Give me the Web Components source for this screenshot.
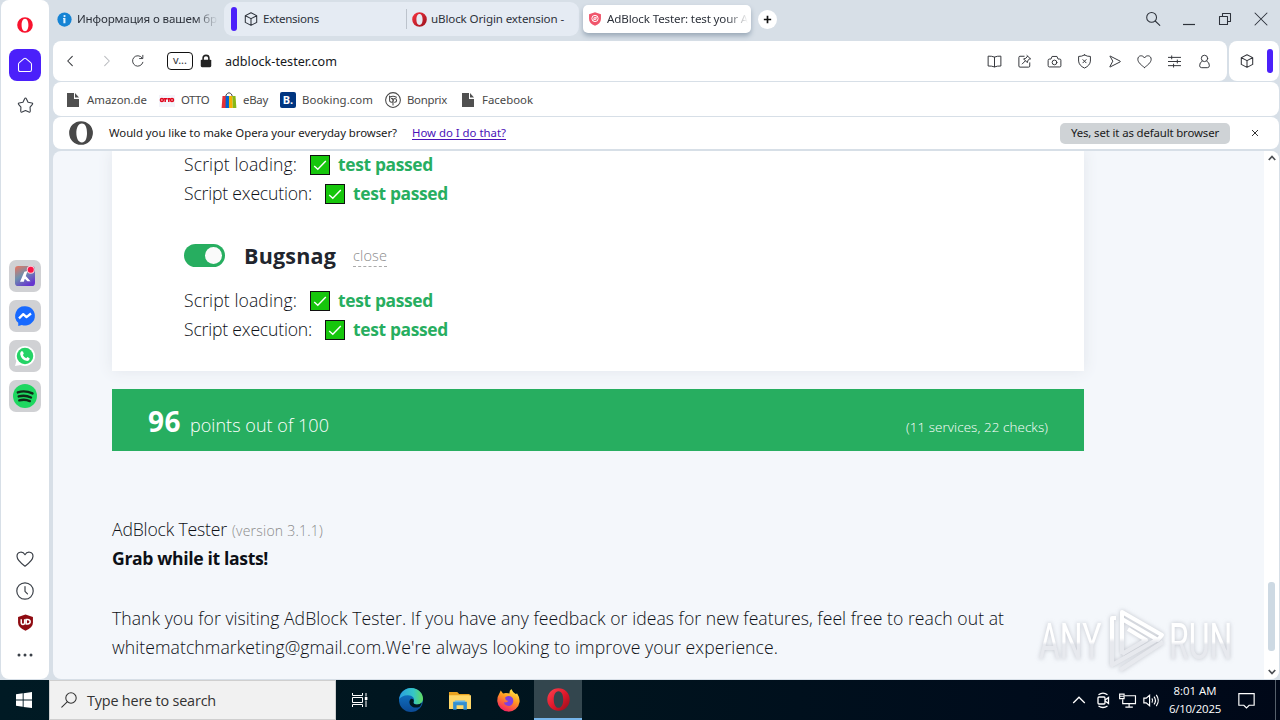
<!DOCTYPE html>
<html lang="en">
<head>
<meta charset="utf-8">
<title>AdBlock Tester</title>
<style>
html,body{margin:0;height:100%}
body{width:1280px;height:720px;overflow:hidden;background:#d7dfe7;font-family:"Noto Sans","Open Sans",sans-serif}
</style>
</head>
<body>
<desktop-screen></desktop-screen>
<script>
const define=(name,css,html,setup)=>customElements.define(name,class extends HTMLElement{
  connectedCallback(){
    if(this.shadowRoot)return;
    const root=this.attachShadow({mode:'open'});
    root.innerHTML='<style>*{box-sizing:border-box}'+css+'</style>'+html;
    if(setup)setup(this,root);
  }
});

/* Text that spreads its letters to fill the width given in "w". */
define('fit-text',`:host{display:block;flex:none;white-space:nowrap}span{display:inline-block;text-decoration:inherit}`,`<span><slot></slot></span>`,(el,root)=>{
  const w=+el.getAttribute('w'),s=root.querySelector('span');
  el.style.width=w+'px';
  const n=el.textContent.length;
  s.style.letterSpacing=((w-s.getBoundingClientRect().width)/n).toFixed(4)+'px';
});

const L='fill="none" stroke="currentColor" stroke-width="1.05" stroke-linecap="round" stroke-linejoin="round"';
const cube=`<path ${L} d="M8 1.8 13.7 4.6V11.4L8 14.4 2.3 11.4V4.6ZM2.5 4.8 8 7.6 13.5 4.8M8 7.6V14.2"/>`;
const heart=`<path ${L} d="M8 14.4C5 12.2 .9 9.2 .9 5.6 .9 1.4 6 .6 8 4.2 10 .6 15.1 1.4 15.1 5.6 15.1 9.2 11 12.2 8 14.4Z"/>`;
const ring=(a)=>`<path fill="${a}" fill-rule="evenodd" d="M8 .2A7.8 7.8 0 1 1 8 15.8 7.8 7.8 0 1 1 8 .2ZM8 2.2C5.7 2.2 4.7 5 4.7 8S5.7 13.8 8 13.8 11.3 11 11.3 8 10.3 2.2 8 2.2Z"/>`;
const file=`<path fill="#505050" d="M2 1H9V7H14V15H2Z"/><path fill="#505050" d="M10 1 14 5.6H10Z"/>`;
const icons={
  operaSide:`<path fill="#f8132e" fill-rule="evenodd" d="M8 .2A7.8 7.8 0 1 1 8 15.8 7.8 7.8 0 1 1 8 .2ZM8 1.8C5.6 1.8 4.6 5 4.6 8S5.6 14.2 8 14.2 11.4 11 11.4 8 10.4 1.8 8 1.8Z"/>`,
  operaTab:`<defs><linearGradient id="g" x2="1" y2="1"><stop stop-color="#fa3340"/><stop offset="1" stop-color="#99121d"/></linearGradient></defs>`+ring('url(#g)'),
  operaGrey:`<path fill="#484848" fill-rule="evenodd" d="M8 .1A7.9 7.9 0 1 1 8 15.9 7.9 7.9 0 1 1 8 .1ZM8.6 1.7C6 1.7 4.9 5 4.9 8S6 14.3 8.6 14.3 12 11 12 8 11.2 1.7 8.6 1.7Z"/><path fill="#484848" d="M9.6 1.2Q13.2 2.8 13.2 8T9.6 14.8Q15.6 13.6 15.6 8T9.6 1.2Z"/>`,
  home:`<path ${L} d="M1.5 7.2Q1.5 6.2 2.3 5.6L7 1.6Q8 .9 9 1.6L13.7 5.6Q14.5 6.2 14.5 7.2V12.8Q14.5 14.5 12.8 14.5H3.2Q1.5 14.5 1.5 12.8Z"/>`,
  star:`<path ${L} d="M8 1 Q8.5 1 8.9 1.8L10.4 4.9 14 5.6Q15.2 6 14.5 6.9L12.3 9.6 12.5 13.2Q12.4 14.6 11.2 14.2L8 12.8 4.8 14.2Q3.6 14.6 3.5 13.2L3.7 9.6 1.5 6.9Q.8 6 2 5.6L5.6 4.9 7.1 1.8Q7.5 1 8 1Z"/>`,
  heart,cube,file,
  clock:`<circle cx="8" cy="8" r="7.3" ${L}/><path ${L} d="M8 4V8.3L10.2 10.6"/>`,
  ublock:`<path fill="#8f0c12" d="M8 .5 15 2.8V8Q15 13 8 15.7 1 13 1 8V2.8Z"/><path fill="none" stroke="#fff" stroke-width="1.4" d="M4 5V8Q4 9.8 5.6 9.8T7.2 8V5M8.7 5.2V9.5H10Q12.4 9.2 12.4 7.3T10 5.2Z"/>`,
  dots:`<circle cx="2" cy="8" r="1.5" fill="currentColor"/><circle cx="8" cy="8" r="1.5" fill="currentColor"/><circle cx="14" cy="8" r="1.5" fill="currentColor"/>`,
  info:`<circle cx="8" cy="8" r="7.6" fill="#1583d4"/><circle cx="8" cy="4.3" r="1.2" fill="#dff1ff"/><path fill="#dff1ff" d="M6.4 6.4H9V12H6.8V7.4H6.4Z"/>`,
  shieldRed:`<path fill="#f0566c" d="M8 .2 14.8 2.5V8Q14.8 13 8 15.8 1.2 13 1.2 8V2.5Z"/><circle cx="8" cy="7.4" r="3.6" fill="none" stroke="#fff" stroke-width="1.1"/><circle cx="8" cy="7.4" r="1.4" fill="none" stroke="#fff" stroke-width=".9"/><path stroke="#fff" d="M5.5 10 10.6 4.9"/>`,
  plus:`<path stroke="#111" stroke-width="3" d="M8 1.5V14.5M1.5 8H14.5"/>`,
  search:`<circle cx="6.6" cy="6.4" r="4.9" ${L}/><path ${L} d="M10.2 10 14.8 14.4"/>`,
  min:`<path stroke="currentColor" stroke-width="1.2" d="M2 13.5H14"/>`,
  restore:`<path ${L} d="M2.5 5.5H10.5V13.5H2.5ZM5.5 5.5V2.5H13.5V10.5H10.5"/>`,
  close:`<path ${L} d="M2 2 14 14M14 2 2 14"/>`,
  closeSmall:`<path fill="none" stroke="#333" stroke-width="2" d="M2 2 14 14M14 2 2 14"/>`,
  back:`<path ${L} d="M10.3 3.4 5.7 8 10.3 12.6"/>`,
  fwd:`<path ${L} d="M5.7 3.4 10.3 8 5.7 12.6"/>`,
  reload:`<path ${L} d="M13.6 9.5A6 6 0 1 1 12.6 4.3M13.5 1.5V5.2H9.8"/>`,
  lock:`<path fill="#222" d="M3 6.5H13Q14 6.5 14 7.5V13.5Q14 15 12.5 15H3.5Q2 15 2 13.5V7.5Q2 6.5 3 6.5Z"/><path fill="none" stroke="#222" stroke-width="1.8" d="M4.7 7V4.6Q4.7 1.6 8 1.6T11.3 4.6V7"/>`,
  book:`<path ${L} d="M8 3.3Q5 2 1.2 2.3V12.8Q5 12.6 8 13.8 11 12.6 14.8 12.8V2.3Q11 2 8 3.3V13.6"/>`,
  edit:`<path ${L} d="M7.6 2.4H3.2Q2 2.4 2 3.6V12.8Q2 14 3.2 14H12.4Q13.6 14 13.6 12.8V9.4M10.6 1.6 14.6 5.4M11.2 2.4 9.4 4.6 7 5.2 11 9.2 11.6 6.8 13.8 5M8.8 7.4 5.6 10.6"/>`,
  camera:`<path ${L} d="M1.2 6.6Q1.2 5.4 2.4 5.4H4.2L5.4 2.6H10.6L11.8 5.4H13.6Q14.8 5.4 14.8 6.6V12.6Q14.8 13.8 13.6 13.8H2.4Q1.2 13.8 1.2 12.6Z"/><circle cx="8" cy="9" r="2.5" ${L}/>`,
  shield:`<path ${L} d="M8 1Q11 2.8 14.3 2.6V7.6Q13.8 12.4 8 15 2.2 12.4 1.7 7.6V2.6Q5 2.8 8 1ZM6.3 6 9.7 9.4M9.7 6 6.3 9.4"/>`,
  send:`<path ${L} d="M3.2 2.6Q2.6 2 3.4 2.2L14 7.6Q14.6 8 14 8.4L3.4 13.8Q2.6 14 3.2 13.2L6 8Z"/>`,
  sliders:`<path ${L} d="M1.5 3.6H14.5M1.5 8H14.5M1.5 12.4H14.5M5 2V5.2M11 6.4V9.6M7 10.8V14"/>`,
  person:`<circle cx="8" cy="4.7" r="3.4" ${L}/><path ${L} d="M5.5 7.6Q2.6 9 2.8 12.6 3 14.6 5 14.6H11Q13 14.6 13.2 12.6 13.4 9 10.5 7.6"/>`,
  otto:`<path fill="#f4f4fa" d="M0 3H16V15H0Z"/><g fill="none" stroke="#e0051c" stroke-width="1.5"><circle cx="2.9" cy="8" r="1.5"/><path d="M4.6 6.7H8M6.2 6.7V10M8.3 6.7H11.4M9.8 6.7V10"/><circle cx="13" cy="8" r="1.5"/></g>`,
  ebay:`<path fill="none" stroke="#444" d="M5 5V3Q8-1.5 11 3V5"/><path fill="#e53238" d="M1.5 4H5V16H.6Z"/><path fill="#0064d2" d="M4.7 4H8V16H4.5Z"/><path fill="#f5af02" d="M8 4H11.3L11.8 16H8Z"/><path fill="#86b817" d="M11.3 4H14.5L15.4 16H11.8Z"/>`,
  bonprix:`<circle cx="8" cy="8" r="7.4" ${L}/><path ${L} d="M4.6 4V8.2A1.9 1.9 0 1 0 6.4 6.4Q8 6.6 8 8.4V13M8 8.4Q8 6.4 9.8 6.4A1.9 1.9 0 1 1 9.6 10.2M4.6 5.2Q8 3.4 11.4 5.2"/>`,
  up:`<path fill="none" stroke="currentColor" stroke-width="3.4" d="M1.5 12 8 5 14.5 12"/>`,
  down:`<path fill="none" stroke="currentColor" stroke-width="3.4" d="M1.5 4 8 11 14.5 4"/>`,
  aria:`<defs><linearGradient id="g" x1="0" y1="0" x2=".6" y2="1"><stop stop-color="#ed735c"/><stop offset=".5" stop-color="#6f91ad"/><stop offset="1" stop-color="#6636cf"/></linearGradient></defs><rect width="16" height="16" rx="2.5" fill="url(#g)"/><path fill="#fff" d="M7.5 4.5 10 4 7 12.5H4ZM8.6 8 12.4 12.2H10L7.4 9.8Z"/><circle cx="12.6" cy="3" r="3.2" fill="#ffccd6"/><circle cx="12.6" cy="3" r="2.4" fill="#fa1446"/>`,
  messenger:`<path fill="#1769ff" d="M8 .2A7.7 7.7 0 1 1 5.5 15.1L2.6 16V13.4A7.6 7.6 0 0 1 8 .2Z"/><path fill="none" stroke="#fff" stroke-width="1.8" stroke-linejoin="round" d="M3.2 9.9 6.6 6.5 9.2 8.9 12.8 6"/>`,
  whatsapp:`<path fill="#fff" d="M8 0A8 8 0 1 1 4.4 15.1L0 16 1.1 12A8 8 0 0 1 8 0Z"/><circle cx="8" cy="8" r="6.6" fill="#25d366"/><path fill="#fff" d="M5 4.2 6.4 4.4 7 6.1 6.3 7.2Q7.2 9 9 9.7L9.9 8.8 11.7 9.7Q11.8 11.6 9.8 11.9 5 11.2 4.1 6.3 4.1 5 5 4.2Z"/>`,
  spotify:`<circle cx="8" cy="8" r="8" fill="#1ed760"/><path fill="none" stroke="#102a18" stroke-width="1.6" stroke-linecap="round" d="M3.2 5.6Q8 4 13 6.3M3.8 8.3Q8 7 12 9M4.2 10.9Q8 9.8 11.2 11.4"/>`,
  win:`<path fill="#fff" d="M0 2.3 6.7 1.3V7.6H0ZM7.6 1.2 16 0V7.6H7.6ZM0 8.5H6.7V14.8L0 13.8ZM7.6 8.5H16V16L7.6 14.9Z"/>`,
  winsearch:`<circle cx="10" cy="6" r="5.2" ${L}/><path ${L} d="M6.2 9.8.8 15.2"/>`,
  tasks:`<path fill="none" stroke="#fff" d="M.5 1V3.5H10.5V1M.5 15V12.5H10.5V15M.5 5.5H10.5V10.5H.5ZM14 1V4.5M14 8.5V15"/><path fill="#fff" d="M12.8 5H15.4V8H12.8Z"/>`,
  edge:`<defs><linearGradient id="g" x2="1"><stop stop-color="#2a9fe0"/><stop offset=".6" stop-color="#35c6c6"/><stop offset="1" stop-color="#62db5c"/></linearGradient><linearGradient id="h" y2="1" x2="0"><stop stop-color="#117ccd"/><stop offset="1" stop-color="#0b4a95"/></linearGradient></defs><circle cx="8" cy="8" r="8" fill="url(#h)"/><path fill="url(#g)" d="M.1 7.4C.8 2.8 4.3 0 8 0 13 0 16 3.8 16 7 16 9.7 14 11 12 11 10 11 9.3 10.2 9.8 9.2 10.8 7 9 4.8 6 4.8 3 4.8 1 6 .1 7.4Z"/><path fill="#001820" d="M9.8 9.2Q9.2 10.4 10.8 10.9 13.5 11.4 15.1 9.9 15 11.4 13.6 12.7 9 13.9 7.3 11 6.3 8.7 8 7.2 10.2 7 9.8 9.2Z"/>`,
  folder:`<path fill="#e9a21f" d="M0 1.5H6L7.4 3H15V6H0Z"/><path fill="#ffd768" d="M0 4H16V14.5H0Z"/><path fill="#338fd0" d="M3 9H13V15H10.5V11.7H5.5V15H3Z"/><path fill="#65b7ec" d="M4.2 8H11.8V9.3H4.2Z"/>`,
  firefox:`<defs><linearGradient id="g" x1=".8" y1="0" x2=".3" y2="1"><stop stop-color="#fff04a"/><stop offset=".45" stop-color="#ff9821"/><stop offset="1" stop-color="#f51b65"/></linearGradient></defs><path fill="url(#g)" d="M1.6 3.2 2.6 1 4.2 3.2 6.2 2.8Q8.2 2.8 8.6 3.2 8.6 1 10 0 10.8 2.2 13 3.5L14 3.2Q16 6 15.7 9A7.8 7.8 0 0 1 .2 8.6Q.1 5.3 1.6 3.2Z"/><path fill="#7f3fe0" d="M5.8 5.7Q9 3.8 11 6.5 12.3 10.4 8.6 11.9 5.4 11.8 4.8 9.2 6.7 10 8 8.2 5.3 8 5.8 5.7Z"/>`,
  operaTask:`<defs><linearGradient id="g" x2="1" y2="1"><stop stop-color="#ff4250"/><stop offset=".55" stop-color="#dd1629"/><stop offset="1" stop-color="#8d101c"/></linearGradient></defs>`+ring('url(#g)'),
  chevUp:`<path fill="none" stroke="#fff" stroke-width="1.3" d="M2.2 11 8 5.2 13.8 11"/>`,
  meet:`<g fill="none" stroke="#fff" stroke-width="1.3"><rect x="3" y="5" width="7" height="7" rx="1"/><path d="M10 8 13.5 5.6V11.4L10 9M3.5 2.8Q8-.5 12.5 2.8M3.5 14Q8 17 12.5 14"/></g>`,
  net:`<g fill="none" stroke="#fff" stroke-width="1.1"><path d="M5.5 3.5H15.5V11H3.5V7M9.5 11V14M6 14.2H13M.6 2H4.8V6.3H.6ZM.6 4H4.8"/></g>`,
  sound:`<g fill="none" stroke="#fff" stroke-width="1.1"><path d="M.8 5.8H3L6.2 3V13L3 10.2H.8ZM8.4 6Q9.8 8 8.4 10M10.4 4.3Q13 8 10.4 11.7M12.5 2.7Q16.3 8 12.5 13.3"/></g>`,
  note:`<path fill="none" stroke="#fff" stroke-width="1.1" d="M.8 1.5H15.2V12.5H10.5L8 15 5.5 12.5H.8Z"/>`
};
define('ui-icon',`:host{display:block;flex:none;line-height:0}svg{display:block;width:100%;height:100%;overflow:visible}`,'',(el,root)=>{
  const s=el.getAttribute('s')||16;
  el.style.width=s+'px';el.style.height=(el.getAttribute('h')||s)+'px';
  root.innerHTML+=`<svg viewBox="0 0 16 16" ${el.hasAttribute('h')?'preserveAspectRatio="none"':''}>${icons[el.getAttribute('name')]}</svg>`;
});

define('side-bar',`:host{display:flex;flex-direction:column;align-items:center;width:48px;height:679px;margin-left:1px;background:#fff;border-radius:8px;color:#3b4048;padding-top:17px}
.home{display:grid;place-items:center;width:32px;height:32px;border-radius:8px;background:#4b20fa;color:#fff;margin:16px 0 16px}
.apps{display:grid;gap:8px;margin-top:146px}.apps div{width:32px;height:32px;border-radius:7px;background:#d0d1d4;display:grid;place-items:center}
.low{display:grid;gap:14px;margin-top:138px;justify-items:center}`,
`<ui-icon name="operaSide" s="16"></ui-icon><div class="home"><ui-icon name="home" s="16"></ui-icon></div><ui-icon name="star" s="17"></ui-icon>
<div class="apps"><div><ui-icon name="aria" s="20"></ui-icon></div><div><ui-icon name="messenger" s="20"></ui-icon></div><div><ui-icon name="whatsapp" s="20"></ui-icon></div><div><ui-icon name="spotify" s="24"></ui-icon></div></div>
<div class="low"><ui-icon name="heart" s="18"></ui-icon><ui-icon name="clock" s="18"></ui-icon><ui-icon name="ublock" s="17"></ui-icon><ui-icon name="dots" s="16" style="margin-top:2px"></ui-icon></div>`);

define('tab-strip',`:host{display:flex;height:41px;font-size:11.6px;line-height:18px;color:#2d323b;position:relative}
.t{display:flex;align-items:center;height:38px;overflow:hidden}
.fade{-webkit-mask:linear-gradient(90deg,#000 calc(100% - 22px),transparent);mask:linear-gradient(90deg,#000 calc(100% - 22px),transparent);overflow:hidden}
.t1{width:171px;padding-left:4px}.t1 .fade{width:141px;margin-left:5px}
.grp{display:flex;width:355px;height:34px;margin-top:2px;background:#e5ebf3;border-radius:9px;align-items:center}
.grp i{width:6px;height:24px;border-radius:3px;background:#4b20fa;margin:0 6px 0 7px}
.sep{width:1px;height:20px;background:#bcc3cc;margin:0 5px 0 87px}
.act{width:168px;height:28px;margin:5px 0 0 4px;background:#fff;border-radius:5px;box-shadow:0 3px 5px #9aa9b8;padding-left:5px}
.act .fade{width:141px;margin-left:5px}
.new{width:19px;height:19px;border-radius:50%;background:#fff;display:grid;place-items:center;margin:10px 0 0 7px}
.win{display:flex;gap:20px;margin:11px 11px 0 auto}`,
`<div class="t t1"><ui-icon name="info" s="15"></ui-icon><div class="fade"><fit-text w="140">Информация о вашем бр</fit-text></div></div>
<div class="grp"><i></i><ui-icon name="cube" s="16"></ui-icon><fit-text w="56" style="margin-left:4px">Extensions</fit-text><div class="sep"></div><ui-icon name="operaTab" s="15"></ui-icon><fit-text w="133" style="margin-left:4px">uBlock Origin extension -</fit-text></div>
<div class="t act"><ui-icon name="shieldRed" s="14"></ui-icon><div class="fade"><fit-text w="141">AdBlock Tester: test your A</fit-text></div></div>
<div class="new"><ui-icon name="plus" s="9"></ui-icon></div>
<div class="win"><ui-icon name="search"></ui-icon><ui-icon name="min"></ui-icon><ui-icon name="restore"></ui-icon><ui-icon name="close"></ui-icon></div>`);

define('address-bar',`:host{display:flex;gap:2px;height:40px;color:#33353a}
div{display:flex;align-items:center;background:#fff;border-radius:8px}
.a{width:1174px;padding-left:9px}.b{width:50px;padding-left:10px;gap:12px}.b i{width:6px;height:24px;border-radius:3px;background:#4b20fa}
.v{width:26px;height:18px;border:1px solid #111;border-radius:4px;justify-content:center;font-size:11px;margin:0 6px 0 22px;line-height:14px;padding-bottom:2px}
.r{gap:15px;margin-left:auto;padding-right:15px}`,
`<div class="a"><ui-icon name="back"></ui-icon><ui-icon name="fwd" style="margin-left:21px;color:#b9bbbf"></ui-icon><ui-icon name="reload" s="14" style="margin-left:16px"></ui-icon><div class="v"><fit-text w="14">v...</fit-text></div><ui-icon name="lock" s="14"></ui-icon><fit-text w="112" style="font-size:12.6px;margin-left:12px;color:#16181c">adblock-tester.com</fit-text>
<div class="r">${['book','edit','camera','shield','send','heart','sliders','person'].map(n=>`<ui-icon name="${n}" s="15"></ui-icon>`).join('')}</div></div>
<div class="b"><ui-icon name="cube" s="16"></ui-icon><i></i></div>`);

define('bookmark-bar',`:host{display:flex;align-items:center;width:1226px;height:34px;background:#fff;border-radius:8px;margin-top:1px;padding:2px 0 0 12px;font-size:11.4px;color:#484848;line-height:18px}
.b{width:16px;height:16px;border-radius:2px;background:#003580;color:#fff;font-weight:700;font-size:11px;line-height:15px;text-align:center}`,
`<ui-icon name="file"></ui-icon><fit-text w="60" style="margin-left:6px">Amazon.de</fit-text>
<ui-icon name="otto" style="margin-left:12px"></ui-icon><fit-text w="28" style="margin-left:6px">OTTO</fit-text>
<ui-icon name="ebay" style="margin-left:12px"></ui-icon><fit-text w="25" style="margin-left:6px">eBay</fit-text>
<div class="b" style="margin-left:12px">B.</div><fit-text w="71" style="margin-left:6px">Booking.com</fit-text>
<ui-icon name="bonprix" style="margin-left:12px"></ui-icon><fit-text w="40" style="margin-left:6px">Bonprix</fit-text>
<ui-icon name="file" style="margin-left:13px"></ui-icon><fit-text w="51" style="margin-left:6px">Facebook</fit-text>`);

define('default-banner',`:host{display:flex;align-items:center;width:1226px;height:32px;background:#fff;border-radius:8px;margin-top:1px;padding-left:16px;font-size:11.4px;line-height:18px;color:#1a1a1a}
a{color:#4a12b8;margin-left:15px}a fit-text{text-decoration:underline;text-underline-offset:2px}
button{all:unset;display:flex;justify-content:center;width:170px;height:21px;line-height:20px;border-radius:5px;background:#cfd3d6;margin-left:auto}
`,
`<ui-icon name="operaGrey" s="24"></ui-icon><fit-text w="288" style="margin-left:16px">Would you like to make Opera your everyday browser?</fit-text><a><fit-text w="94">How do I do that?</fit-text></a>
<button><fit-text w="148">Yes, set it as default browser</fit-text></button><ui-icon name="closeSmall" s="8" style="margin:0 20px 0 21px"></ui-icon>`);

define('test-row',`:host{display:flex;align-items:center;height:29px;font:300 17.6px/29px "Open Sans","Noto Sans",sans-serif;color:#0d1016}
i{width:20px;height:20px;background:#16c60c;border:1.5px solid #101010;margin:0 8px 0 13px;display:grid;place-items:center}
b{font:700 17.4px/29px "Open Sans","Noto Sans",sans-serif;color:#27ae60}svg{width:14px;height:14px}`,
`<slot></slot><i><svg viewBox="0 0 14 14"><path d="M1.2 8 4.8 11.3 12.8 3" fill="none" stroke="#fff" stroke-width="1.4"/></svg></i><b><fit-text w="95">test passed</fit-text></b>`);

define('service-head',`:host{display:flex;align-items:center;height:34px;font-family:"Open Sans","Noto Sans",sans-serif}
.sw{width:41px;height:23px;border-radius:12px;background:#27ae60;padding:3px 3px 0 21px;margin-right:19px}.sw i{display:block;width:17px;height:17px;border-radius:50%;background:#fafafa}
b{font-size:21.5px;line-height:30px;color:#21252d;padding-top:1px}
.c{font-weight:300;font-size:14.5px;line-height:20px;color:#8a8a8a;margin-left:17px;border-bottom:1px dashed #aaa;height:21px;margin-top:3px}`,
`<div class="sw"><i></i></div><b><fit-text w="92">Bugsnag</fit-text></b><div class="c"><fit-text w="34">close</fit-text></div>`);

define('page-view',`:host{display:flex;width:1226px;height:528px;margin-top:2px;background:#f4f7fb;border-radius:8px;overflow:hidden;font-family:"Open Sans","Noto Sans",sans-serif;color:#0d1016}
main{display:flex;flex-direction:column;width:1211px;padding-left:59px}
.card{display:flex;flex-direction:column;flex:none;width:972px;height:220px;background:#fff;box-shadow:0 0 14px #e2e6ec;padding-left:72px}
.card>*{flex:none}
.up{margin-top:-1px}
.score{flex:none;width:972px;height:62px;background:#27ae60;margin-top:18px;color:#fff;display:flex;align-items:baseline;padding:13px 36px 0}
.foot{flex:none;padding-top:64px;font-weight:300;font-size:17.6px;line-height:29px}
.l{display:flex;align-items:baseline}
.sb{width:15px;background:#fff;display:flex;flex-direction:column;align-items:center;color:#4d5055;padding:3px 0 3px}
.sb i{width:7px;height:69px;border-radius:3px;background:#cdd9e3;margin-top:420px;margin-bottom:auto}`,
`<main><div class="card"><test-row class="up"></test-row><test-row></test-row>
<service-head style="margin:30px 0 14px"></service-head>
<test-row></test-row><test-row></test-row></div>
<div class="score"><fit-text w="33" style="font-size:28px;font-weight:700">96</fit-text><fit-text w="139" style="font-size:18px;font-weight:300;margin-left:9px">points out of 100</fit-text><fit-text w="142" style="font-size:13.4px;font-weight:300;margin-left:auto">(11 services, 22 checks)</fit-text></div>
<div class="foot"><div class="l"><fit-text w="115">AdBlock Tester</fit-text><fit-text w="91" style="font-size:14px;color:#8a8a8a;margin-left:5px">(version 3.1.1)</fit-text></div>
<fit-text w="156" style="font-weight:700;margin-top:-1px">Grab while it lasts!</fit-text>
<fit-text w="892" style="margin-top:31px">Thank you for visiting AdBlock Tester. If you have any feedback or ideas for new features, feel free to reach out at</fit-text>
<fit-text w="666">whitematchmarketing@gmail.com.We're always looking to improve your experience.</fit-text></div></main>
<div class="sb"><ui-icon name="up" s="8"></ui-icon><i></i><ui-icon name="down" s="8"></ui-icon></div>`,(el,root)=>{
  root.querySelectorAll('test-row').forEach((row,i)=>{
    row.innerHTML=i%2?'<fit-text w="128">Script execution:</fit-text>':'<fit-text w="113">Script loading:</fit-text>';
  });
});

/* Translucent brand mark that floats over the page. */
define('water-mark',`:host{position:absolute;left:1030px;top:600px;width:250px;height:80px;pointer-events:none}
svg{display:block;overflow:visible;filter:drop-shadow(0 0 2px #9a9ea890)}text{font:400 50px Roboto,sans-serif;fill:url(#w)}`,
`<svg width="250" height="80"><defs><linearGradient id="w" x1="0" y1="0" x2="0" y2="1"><stop offset=".5" stop-color="#fff"/><stop offset=".55" stop-color="#e7e9ee"/></linearGradient><linearGradient id="v" gradientUnits="userSpaceOnUse" x1="0" y1="38" x2="0" y2="42"><stop stop-color="#fff"/><stop offset="1" stop-color="#e7e9ee"/></linearGradient></defs>
<g transform="translate(9 59) scale(.64 1)"><text>ANY</text></g><g transform="translate(139 59) scale(.64 1)"><text>RUN</text></g>
<g fill="none" stroke="url(#v)" stroke-width="4" stroke-linejoin="round"><path d="M86 18H82V65L128 39M92 54V12L132 35 128 40 92 19M92 54 116 40 98 29M90 70 133 42"/></g></svg>`);

define('task-bar',`:host{display:flex;width:1280px;height:40px;background:linear-gradient(90deg,#001a24,#00141e 45%,#000c1c 80%,#000818);color:#fff;font-family:"Open Sans","Noto Sans",sans-serif}
.s{width:49px;display:grid;place-items:center}.s ui-icon{margin-right:2px}
.q{width:287px;background:#f1f1f1;border:1px solid #cfcfcf;display:flex;align-items:center;color:#333;padding-left:11px;font-size:14.4px}
.c{width:48px;display:grid;place-items:center}.w{width:50px}
.on{background:#33464e;border-bottom:2px solid #76b5ea}
.r{display:flex;align-items:center;margin-left:auto}
.d{font-size:11.4px;line-height:18px;display:grid;justify-items:center;margin:0 17px 0 9px}
.end{width:1px;height:40px;background:#56606b;margin-left:20px;margin-right:4px}`,
`<div class="s"><ui-icon name="win"></ui-icon></div><div class="q"><ui-icon name="winsearch" s="16"></ui-icon><fit-text w="129" style="margin-left:10px">Type here to search</fit-text></div>
<div class="c"><ui-icon name="tasks"></ui-icon></div><div class="c w" style="padding-left:4px"><ui-icon name="edge" s="24"></ui-icon></div><div class="c" style="padding-left:3px"><ui-icon name="folder" s="22" h="21"></ui-icon></div><div class="c w" style="padding-left:2px"><ui-icon name="firefox" s="23"></ui-icon></div><div class="c on" style="margin-left:2px"><ui-icon name="operaTask" s="23"></ui-icon></div>
<div class="r"><ui-icon name="chevUp" s="16"></ui-icon><ui-icon name="meet" s="16" style="margin-left:8px"></ui-icon><ui-icon name="net" s="17" style="margin-left:8px"></ui-icon><ui-icon name="sound" s="17" style="margin-left:7px"></ui-icon><div class="d"><fit-text w="43">8:01 AM</fit-text><fit-text w="52">6/10/2025</fit-text></div><ui-icon name="note" s="17"></ui-icon><div class="end"></div></div>`);

define('desktop-screen',`:host{display:block;position:relative;width:1280px;height:720px;overflow:hidden}
.b{display:flex;gap:4px;height:680px}.m{width:1227px}`,
`<div class="b"><side-bar></side-bar><div class="m"><tab-strip></tab-strip><address-bar></address-bar><bookmark-bar></bookmark-bar><default-banner></default-banner><page-view></page-view></div></div><task-bar></task-bar><water-mark></water-mark>`);
</script>
</body>
</html>
